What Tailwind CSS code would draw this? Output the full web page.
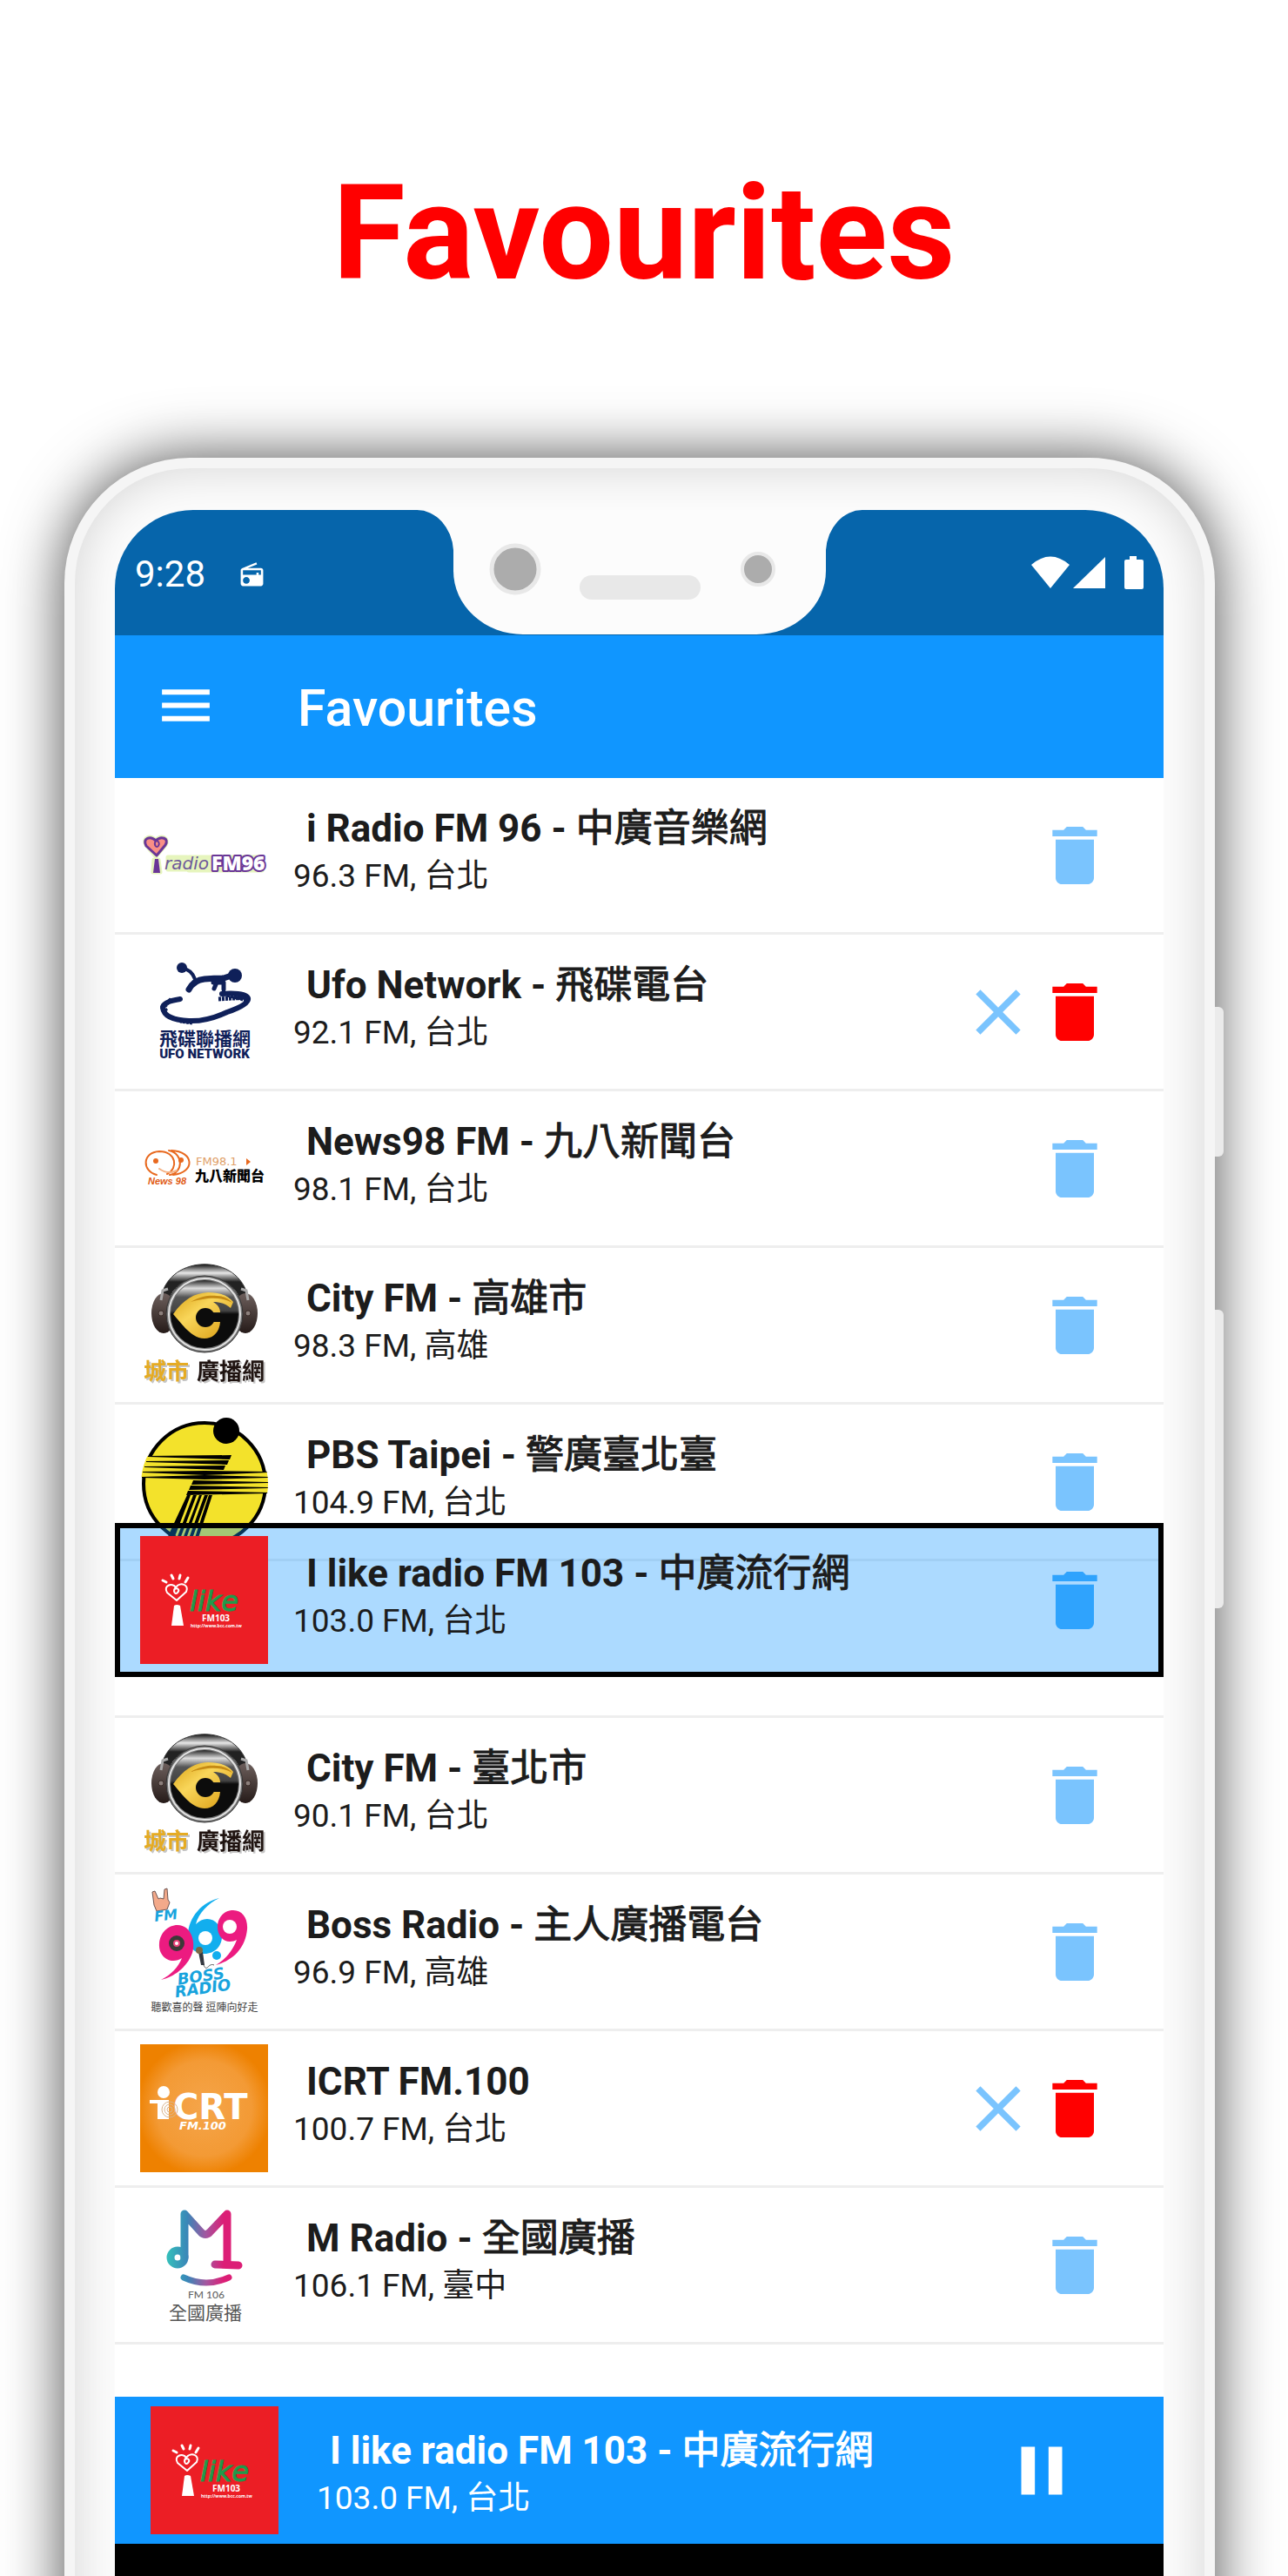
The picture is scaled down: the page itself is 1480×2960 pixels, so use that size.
<!DOCTYPE html>
<html lang="en">
  <head>
    <meta charset="UTF-8" />
    <meta name="viewport" content="width=device-width, initial-scale=1.0" />
    <title>Favourites</title>
    <!-- Tailwind CSS CDN -->
    <script src="https://cdn.jsdelivr.net/npm/@tailwindcss/browser@4"></script>
  </head>
  <body class="bg-white font-[Roboto,'Noto_Sans_CJK_TC',sans-serif] text-[#1c1c1c]">
    <!-- Shared icons and gradients -->
    <svg class="absolute size-0" aria-hidden="true">
      <defs>
        <linearGradient id="band" x1="0" y1="0" x2="0" y2="1">
          <stop offset="0" stop-color="#111" />
          <stop offset="0.25" stop-color="#e8e8e8" />
          <stop offset="0.5" stop-color="#222" />
        </linearGradient>
        <linearGradient id="glass" x1="0" y1="0" x2="0" y2="1">
          <stop offset="0" stop-color="#222" />
          <stop offset="0.12" stop-color="#ddd" />
          <stop offset="0.25" stop-color="#555" />
          <stop offset="0.45" stop-color="#444" />
          <stop offset="0.5" stop-color="#0c0c0c" />
          <stop offset="1" stop-color="#0c0c0c" />
        </linearGradient>
        <linearGradient id="gold" x1="0" y1="0" x2="1" y2="1">
          <stop offset="0" stop-color="#d9a114" />
          <stop offset="0.4" stop-color="#f9d65a" />
          <stop offset="1" stop-color="#d99a10" />
        </linearGradient>
        <linearGradient id="pad" x1="0" y1="0" x2="0" y2="1">
          <stop offset="0" stop-color="#6d5f5c" />
          <stop offset="1" stop-color="#251a18" />
        </linearGradient>
        <radialGradient id="orange" cx="0.5" cy="0.5" r="0.62">
          <stop offset="0" stop-color="#f5a54a" />
          <stop offset="0.6" stop-color="#f39a35" />
          <stop offset="0.85" stop-color="#ee8100" />
        </radialGradient>
        <linearGradient id="mradio" gradientUnits="userSpaceOnUse" x1="32" y1="0" x2="112" y2="0">
          <stop offset="0" stop-color="#35bdbb" />
          <stop offset="0.28" stop-color="#3a86b8" />
          <stop offset="0.55" stop-color="#a4569f" />
          <stop offset="0.8" stop-color="#dc1e76" />
        </linearGradient>
        <clipPath id="disc"><circle cx="74" cy="76" r="73" /></clipPath>
      </defs>

      <symbol id="trash" viewBox="0 0 24 24">
        <path d="M6 19c0 1.1.9 2 2 2h8c1.1 0 2-.9 2-2V7H6v12zM19 4h-3.5l-1-1h-5l-1 1H5v2h14V4z" />
      </symbol>
      <symbol id="close" viewBox="0 0 24 24">
        <path d="M19 6.41L17.59 5 12 10.59 6.41 5 5 6.41 10.59 12 5 17.59 6.41 19 12 13.41 17.59 19 19 17.59 13.41 12z" />
      </symbol>
      <symbol id="headphones" viewBox="0 0 147 147">
        <path d="M24 42C34-9 114-9 124 42l-9 2C104 10 44 10 33 44z" fill="url(#band)" stroke="#333" />
        <ellipse cx="27" cy="60" rx="14" ry="23" fill="url(#pad)" />
        <ellipse cx="121" cy="60" rx="14" ry="23" fill="url(#pad)" />
        <circle cx="24" cy="60" r="3" fill="#8b7f7b" stroke="#3a2c29" />
        <circle cx="124" cy="60" r="3" fill="#8b7f7b" stroke="#3a2c29" />
        <path d="M24 45l2-11 6-2M124 45l-2-11-6-2" fill="none" stroke="#aaa" stroke-width="3" />
        <circle cx="74" cy="61" r="44" fill="#777" stroke="#333" />
        <circle cx="74" cy="61" r="41" fill="none" stroke="#e3e3e3" stroke-width="2" />
        <circle cx="74" cy="61" r="39" fill="url(#glass)" />
        <path d="M38 61C50 44 62 37 78 36c14 0 24 4 29 11l-3 7c-6-5-12-7-20-7 5 3 8 7 8 12H81c-5-4-15-1-15 6 0 9 11 12 15 5h11c-1 12-8 19-18 19-14 0-24-14-36-28z" fill="url(#gold)" />
        <path d="M58 47c12-7 22-8 30-7 8 0 14 3 18 8-10-6-24-6-34-4q-8 1-14 3z" fill="#c58a14" />
        <circle cx="75" cy="65" r="11" fill="#0c0c0c" />
        <path d="M75 60h18v9H75z" fill="#0c0c0c" />
      </symbol>
    </svg>

    <main class="flex min-h-screen flex-col overflow-hidden">
      <h1 class="h-[526px] pt-[180px] text-center text-[152px] leading-[176px] font-bold text-[#ff0000]">Favourites</h1>

      <!-- Phone -->
      <div class="relative -mb-24 ml-[74px] mr-[84px] flex grow flex-col rounded-t-[144px] bg-[#f5f5f5] px-3 pt-3 shadow-[0_0_68px_rgba(0,0,0,0.7)]">
        <!-- Side buttons -->
        <div class="absolute left-full top-[631px] h-[172px] w-[10px] rounded-r-md bg-[#ebebeb]"></div>
        <div class="absolute left-full top-[979px] h-[343px] w-[10px] rounded-r-md bg-[#ebebeb]"></div>

        <div class="flex grow flex-col rounded-t-[132px] bg-[#fcfcfc] pl-[46px] pr-[47px] pt-12 shadow-[inset_0_0_56px_rgba(0,0,0,0.16)]">
          <!-- Screen -->
          <div class="flex grow flex-col overflow-hidden rounded-t-[90px] bg-white">
            <!-- Status bar -->
            <div class="flex h-36 justify-between bg-[#0665ab] text-white">
              <div class="flex flex-1 items-center gap-[38px] pl-[23px] pt-1">
                <span class="text-[42px] leading-[50px]">9:28</span>
                <svg class="size-[31px]" viewBox="0 0 24 24" fill="currentColor">
                  <path d="M3.24 6.15C2.51 6.43 2 7.17 2 8v12c0 1.1.89 2 2 2h16c1.11 0 2-.9 2-2V8c0-1.11-.89-2-2-2H8.3l8.26-3.34L15.88 1 3.24 6.15zM7 20c-1.66 0-3-1.34-3-3s1.34-3 3-3 3 1.34 3 3-1.34 3-3 3zm13-8h-2v-2h-2v2H4V8h16v4z" />
                </svg>
              </div>
              <!-- Notch -->
              <svg class="h-[143px] w-[512px]" viewBox="0 0 512 143">
                <path d="M0 0A42 50 0 0 1 42 46V70A80 73 0 0 0 122 143H390A80 73 0 0 0 470 70V46A42 50 0 0 1 512 0z" fill="#fcfcfc" />
                <circle cx="113" cy="68" r="27" fill="#acacac" stroke="#e8e8e8" stroke-width="5" />
                <circle cx="392" cy="68" r="18" fill="#acacac" stroke="#e8e8e8" stroke-width="4" />
                <rect x="187" y="75" width="139" height="28" rx="14" fill="#e8e8e8" />
              </svg>
              <div class="flex flex-1 items-center justify-end pr-[22px]">
                <svg class="h-[38px] w-[130px]" viewBox="0 0 130 38" fill="currentColor">
                  <path d="M0 10Q22-9 44 10L22 37z" />
                  <path d="M48 37L85 1v36z" />
                  <path d="M113 0h8v4h6q2 0 2 2v30q0 2-2 2h-18q-2 0-2-2V6q0-2 2-2h4z" />
                </svg>
              </div>
            </div>

            <!-- App bar -->
            <header class="flex h-[164px] items-center gap-[92px] bg-[#1096ff] pb-1 pl-[45px] text-white">
              <button type="button" aria-label="Menu">
                <svg class="size-[73px]" viewBox="0 0 24 24" fill="currentColor">
                  <path d="M3 18h18v-2H3v2zm0-5h18v-2H3v2zm0-7v2h18V6H3z" />
                </svg>
              </button>
              <h2 class="pt-2 text-[59px] leading-[70px] font-medium">Favourites</h2>
            </header>

            <!-- Stations -->
            <ul class="h-[1860px]">
              <li class="flex h-45 items-center border-b-3 border-[#eee] pl-[29px] pr-[58px]">
                <svg class="size-[147px]" viewBox="0 0 147 147">
                  <g stroke="#e6f5bd" stroke-width="5" stroke-linejoin="round" fill="#e6f5bd">
                    <path d="M18 75L7 62c-5-9 6-12 11-5 5-8 16-3 11 5zM16 79h5l2 14h-8z" />
                    <path d="M32 76h22v14h-22zM56 76h84v15h-84z" />
                  </g>
                  <path d="M19 74L7 63c-5-9 5-12 11-6 6-6 16-3 11 5z" fill="#f98f86" stroke="#6a3696" stroke-width="3" stroke-linejoin="round" />
                  <path d="M18 57c-3 5 1 9 3 6s0-6-3-6" fill="none" stroke="#6a3696" stroke-width="2" />
                  <path d="M17 78h4l2 16h-8z" fill="#6a3696" />
                  <text x="28" y="90" font-family="DejaVu Sans" font-style="italic" font-size="20" fill="#6e5a9a">radio</text>
                  <text x="82" y="91" font-family="Open Sans" font-weight="800" font-size="23" fill="#fff" stroke="#6a3696" stroke-width="4" stroke-linejoin="round" paint-order="stroke">FM96</text>
                </svg>
                <div class="ml-[29px] grow self-start pt-[31px]">
                  <h3 class="pl-[15px] text-[44px] leading-[54px] font-bold">i Radio FM 96 - <span class="font-normal [-webkit-text-stroke:1px]">中廣音樂網</span></h3>
                  <p class="text-[37px] leading-[56px]">96.3 FM, 台北</p>
                </div>
                <button type="button" aria-label="Delete" class="text-[#7ac4fe]"><svg class="size-22 fill-current"><use href="#trash" /></svg></button>
              </li>
              <li class="flex h-45 items-center border-b-3 border-[#eee] pl-[29px] pr-[58px]">
                <svg class="size-[147px]" viewBox="0 0 147 147">
                  <g fill="none" stroke="#0f2059" stroke-linecap="round" stroke-linejoin="round">
                    <path d="M49 24q10 1 14 12" stroke-width="4" />
                    <path d="M56 48q6-11 18-12t22-1l12-4" stroke-width="7" />
                    <path d="M84 40l12 0 0 8M88 40l-3 7" stroke-width="5" />
                    <path d="M46 59q-20 3-20 10 2 14 30 15 20 1 44-10 26-9 24-16-3-7-30-5" stroke-width="6" />
                    <path d="M28 67l8-8M30 73l-5-7M60 86l-14-2M90 59l34-2M100 54l22 6" stroke-width="5" stroke-dasharray="3 1" stroke-linecap="butt" />
                  </g>
                  <circle cx="48" cy="23" r="6" fill="#0f2059" />
                  <circle cx="109" cy="32" r="8" fill="#0f2059" />
                  <text x="22" y="112" font-weight="700" font-size="21" fill="#0f2059">飛碟聯播網</text>
                  <text x="74" y="127" text-anchor="middle" font-weight="900" font-size="15" fill="#0f2059">UFO NETWORK</text>
                </svg>
                <div class="ml-[29px] grow self-start pt-[31px]">
                  <h3 class="pl-[15px] text-[44px] leading-[54px] font-bold">Ufo Network - <span class="font-normal [-webkit-text-stroke:1px]">飛碟電台</span></h3>
                  <p class="text-[37px] leading-[56px]">92.1 FM, 台北</p>
                </div>
                <button type="button" aria-label="Cancel" class="text-[#7ac4fe]"><svg class="size-22 fill-current"><use href="#close" /></svg></button>
                <button type="button" aria-label="Confirm delete" class="text-[#ff0000]"><svg class="size-22 fill-current"><use href="#trash" /></svg></button>
              </li>
              <li class="flex h-45 items-center border-b-3 border-[#eee] pl-[29px] pr-[58px]">
                <svg class="size-[147px]" viewBox="0 0 147 147">
                  <g fill="none" stroke="#e8691f" stroke-width="2" stroke-linecap="round">
                    <path d="M19 81C2 77 2 55 22 54c20 0 22 20 9 26" />
                    <path d="M33 53c18 4 16 26 1 28M36 53c26 1 28 25 2 28" />
                    <path d="M22 74q10 7 20 2" stroke="#f4b183" />
                  </g>
                  <circle cx="18" cy="65" r="3" fill="#e8691f" />
                  <circle cx="47" cy="64" r="3" fill="#e8691f" />
                  <text x="9" y="92" font-family="Liberation Sans" font-style="italic" font-weight="700" font-size="11" fill="#e05a14">News 98</text>
                  <text x="64" y="70" font-family="DejaVu Sans" font-size="13" fill="#e0a069">FM98.1</text>
                  <path d="M122 62l5 4-5 4z" fill="#e8691f" />
                  <text x="63" y="88" font-weight="900" font-size="16" fill="#000">九八新聞台</text>
                </svg>
                <div class="ml-[29px] grow self-start pt-[31px]">
                  <h3 class="pl-[15px] text-[44px] leading-[54px] font-bold">News98 FM - <span class="font-normal [-webkit-text-stroke:1px]">九八新聞台</span></h3>
                  <p class="text-[37px] leading-[56px]">98.1 FM, 台北</p>
                </div>
                <button type="button" aria-label="Delete" class="text-[#7ac4fe]"><svg class="size-22 fill-current"><use href="#trash" /></svg></button>
              </li>
              <li class="flex h-45 items-center border-b-3 border-[#eee] pl-[29px] pr-[58px]">
                <svg class="size-[147px]" viewBox="0 0 147 147">
                  <use href="#headphones" />
                  <g class="drop-shadow-[2px_2px_0_#c5c5c5]" font-weight="700" font-size="26">
                    <text x="4" y="136" fill="#e5ab23">城市</text>
                    <text x="65" y="136" fill="#1f1310">廣播網</text>
                  </g>
                </svg>
                <div class="ml-[29px] grow self-start pt-[31px]">
                  <h3 class="pl-[15px] text-[44px] leading-[54px] font-bold">City FM - <span class="font-normal [-webkit-text-stroke:1px]">高雄市</span></h3>
                  <p class="text-[37px] leading-[56px]">98.3 FM, 高雄</p>
                </div>
                <button type="button" aria-label="Delete" class="text-[#7ac4fe]"><svg class="size-22 fill-current"><use href="#trash" /></svg></button>
              </li>
              <li class="flex h-45 items-center border-b-3 border-[#eee] pl-[29px] pr-[58px]">
                <svg class="size-[147px]" viewBox="0 0 147 147">
                  <circle cx="74" cy="76" r="70" fill="#f3e22b" stroke="#000" stroke-width="4" />
                  <g clip-path="url(#disc)">
                    <path d="M0 44h50v24H0zM100 63h47v23h-47z" fill="#f3e22b" />
                    <path d="M9 44L105 43l-2 5L9 45zM7 50l95-1-2 5L7 51zM5 56l93-1-2 5L5 57z" />
                    <path d="M3 62l71-1 73 1v1l-73 3-71-3zM2 68l72-2 73 2v1l-73 2-72-2z" />
                    <path d="M61 72l86 2v1l-88 2zM58 78l89 2v1l-91 2zM55 84l92 2v1l-94 2z" />
                    <path d="M54 89h4L36 147h-9zM61 89h4L43 147h-4zM68 89h3L50 147h-4zM74 89h4L57 147h-4zM79 89h4L64 147h-4z" />
                  </g>
                  <circle cx="99" cy="15" r="15" />
                </svg>
                <div class="ml-[29px] grow self-start pt-[31px]">
                  <h3 class="pl-[15px] text-[44px] leading-[54px] font-bold">PBS Taipei - <span class="font-normal [-webkit-text-stroke:1px]">警廣臺北臺</span></h3>
                  <p class="text-[37px] leading-[56px]">104.9 FM, 台北</p>
                </div>
                <button type="button" aria-label="Delete" class="text-[#7ac4fe]"><svg class="size-22 fill-current"><use href="#trash" /></svg></button>
              </li>
              <!-- Row being dragged, lifted over the row above -->
              <li class="relative h-45 border-b-3 border-[#eee]">
                <div class="absolute inset-x-0 -top-11 flex h-[177px] items-center border-6 border-black bg-[#1096ff]/35 pl-[23px] pr-[52px]">
                  <svg class="size-[147px]" viewBox="0 0 147 147">
                    <path d="M0 0h147v147H0z" fill="#ec1e25" />
                    <g fill="none" stroke="#fff" stroke-linecap="round" stroke-linejoin="round">
                      <path d="M26 51l4 2M36 45l2 4M46 45l-1 4M55 48l-3 5" stroke-width="3" />
                      <path d="M42 74L31 65c-5-8 6-12 10-6 5-7 16-3 12 5z" stroke-width="2" />
                      <path d="M41 59c-4 4-1 9 2 6s0-6-3-4" stroke-width="2" />
                    </g>
                    <path d="M39 80q3-2 7 0l4 23H36z" fill="#fff" />
                    <text x="57" y="86" font-family="DejaVu Sans" font-style="italic" font-size="32" fill="#1f9a4b" stroke="#1f9a4b">like</text>
                    <text x="71" y="98" font-family="Open Sans" font-weight="700" font-size="10" fill="#fff">FM103</text>
                    <text x="58" y="105" font-family="Open Sans" font-weight="700" font-size="5" fill="#fff">http://www.bcc.com.tw</text>
                  </svg>
                  <div class="ml-[29px] grow self-start pt-[25px]">
                    <h3 class="pl-[15px] text-[44px] leading-[54px] font-bold">I like radio FM 103 - <span class="font-normal [-webkit-text-stroke:1px]">中廣流行網</span></h3>
                    <p class="text-[37px] leading-[56px]">103.0 FM, 台北</p>
                  </div>
                  <button type="button" aria-label="Delete" class="text-[#2fa3fd]"><svg class="size-22 fill-current"><use href="#trash" /></svg></button>
                </div>
              </li>
              <li class="flex h-45 items-center border-b-3 border-[#eee] pl-[29px] pr-[58px]">
                <svg class="size-[147px]" viewBox="0 0 147 147">
                  <use href="#headphones" />
                  <g class="drop-shadow-[2px_2px_0_#c5c5c5]" font-weight="700" font-size="26">
                    <text x="4" y="136" fill="#e5ab23">城市</text>
                    <text x="65" y="136" fill="#1f1310">廣播網</text>
                  </g>
                </svg>
                <div class="ml-[29px] grow self-start pt-[31px]">
                  <h3 class="pl-[15px] text-[44px] leading-[54px] font-bold">City FM - <span class="font-normal [-webkit-text-stroke:1px]">臺北市</span></h3>
                  <p class="text-[37px] leading-[56px]">90.1 FM, 台北</p>
                </div>
                <button type="button" aria-label="Delete" class="text-[#7ac4fe]"><svg class="size-22 fill-current"><use href="#trash" /></svg></button>
              </li>
              <li class="flex h-45 items-center border-b-3 border-[#eee] pl-[29px] pr-[58px]">
                <svg class="size-[147px]" viewBox="0 0 147 147">
                  <path d="M14 5l3-1 4 9 2-1 4 1 1-11 3-1 1 13 2 3-3 8-12 2-3-7z" fill="#f3a98a" stroke="#6d5350" />
                  <text x="17" y="39" transform="rotate(-7 17 39)" font-family="DejaVu Sans" font-style="italic" font-weight="700" font-size="16" fill="#17a3dd">FM</text>
                  <path d="M91 12C78 18 67 30 64 42c4-4 8-6 13-6 10 0 17 9 17 20s-8 20-20 20-19-8-19-21C55 34 72 16 91 12z" fill="#12aeee" />
                  <circle cx="75" cy="58" r="8" fill="#fff" />
                  <path d="M24 106C38 103 54 92 60 75c4-12-1-32-17-32-11 0-20 9-21 21-1 12 7 20 16 20 4 0 7-1 10-3-4 10-12 19-24 25z" fill="#ec1b80" />
                  <circle cx="42" cy="64" r="9" fill="#3d3838" />
                  <circle cx="42" cy="64" r="3" fill="#fff" stroke="#e9427a" stroke-width="2" />
                  <path d="M87 89C106 84 121 70 123 48c1-12-5-22-16-22s-18 9-18 19 6 17 14 17c3 0 6-1 8-2-4 11-12 22-24 29z" fill="#ec1b80" />
                  <circle cx="103" cy="45" r="8" fill="#fff" />
                  <circle cx="88" cy="78" r="5" fill="#12aeee" />
                  <path d="M67 74l3 15h4l-2-15z" fill="#343840" />
                  <circle cx="68" cy="72" r="4" fill="#7c6a45" />
                  <path d="M73 89c4 9 5-3 12 0" fill="none" stroke="#555" />
                  <g transform="rotate(-8 42 114)" font-family="DejaVu Sans" font-style="italic" font-weight="700" font-size="18" fill="#17a3dd">
                    <text x="44" y="112">BOSS</text>
                    <text x="39" y="126">RADIO</text>
                  </g>
                  <text x="74" y="142" text-anchor="middle" font-size="12" fill="#444">聽歡喜的聲 逗陣向好走</text>
                </svg>
                <div class="ml-[29px] grow self-start pt-[31px]">
                  <h3 class="pl-[15px] text-[44px] leading-[54px] font-bold">Boss Radio - <span class="font-normal [-webkit-text-stroke:1px]">主人廣播電台</span></h3>
                  <p class="text-[37px] leading-[56px]">96.9 FM, 高雄</p>
                </div>
                <button type="button" aria-label="Delete" class="text-[#7ac4fe]"><svg class="size-22 fill-current"><use href="#trash" /></svg></button>
              </li>
              <li class="flex h-45 items-center border-b-3 border-[#eee] pl-[29px] pr-[58px]">
                <svg class="size-[147px]" viewBox="0 0 147 147">
                  <path d="M0 0h147v147H0z" fill="url(#orange)" />
                  <circle cx="27" cy="55" r="7" fill="#fff" />
                  <path d="M11 64h22v22H20V68h-9z" fill="#fff" />
                  <text x="38" y="86" font-family="DejaVu Sans" font-weight="700" font-size="40" fill="#fff">CRT</text>
                  <g fill="none" stroke="#d9b48c">
                    <circle cx="34" cy="75" r="3" />
                    <circle cx="34" cy="75" r="6" />
                    <circle cx="34" cy="75" r="9" />
                  </g>
                  <text x="45" y="98" font-family="DejaVu Sans" font-style="italic" font-weight="700" font-size="13" fill="#fff">FM.100</text>
                </svg>
                <div class="ml-[29px] grow self-start pt-[31px]">
                  <h3 class="pl-[15px] text-[44px] leading-[54px] font-bold">ICRT FM.100</h3>
                  <p class="text-[37px] leading-[56px]">100.7 FM, 台北</p>
                </div>
                <button type="button" aria-label="Cancel" class="text-[#7ac4fe]"><svg class="size-22 fill-current"><use href="#close" /></svg></button>
                <button type="button" aria-label="Confirm delete" class="text-[#ff0000]"><svg class="size-22 fill-current"><use href="#trash" /></svg></button>
              </li>
              <li class="flex h-45 items-center border-b-3 border-[#eee] pl-[29px] pr-[58px]">
                <svg class="size-[147px]" viewBox="0 0 147 147">
                  <g fill="none" stroke="url(#mradio)" stroke-width="9" stroke-linecap="round" stroke-linejoin="round">
                    <circle cx="43" cy="65" r="8" />
                    <path d="M51 65V15l19 21q5 5 10 0l20-21v58" />
                    <path d="M86 73l27 1" />
                    <path d="M50 88q26 12 52 0" stroke-width="7" />
                  </g>
                  <text x="76" y="112" text-anchor="middle" font-family="Lato" font-weight="500" font-size="12" fill="#666">FM 106</text>
                  <text x="33" y="136" font-size="21" fill="#555">全國廣播</text>
                </svg>
                <div class="ml-[29px] grow self-start pt-[31px]">
                  <h3 class="pl-[15px] text-[44px] leading-[54px] font-bold">M Radio - <span class="font-normal [-webkit-text-stroke:1px]">全國廣播</span></h3>
                  <p class="text-[37px] leading-[56px]">106.1 FM, 臺中</p>
                </div>
                <button type="button" aria-label="Delete" class="text-[#7ac4fe]"><svg class="size-22 fill-current"><use href="#trash" /></svg></button>
              </li>
            </ul>

            <!-- Player -->
            <footer class="flex h-[169px] items-center bg-[#1096ff] pl-[41px] pr-[93px] text-white">
              <svg class="size-[147px]" viewBox="0 0 147 147">
                <path d="M0 0h147v147H0z" fill="#ec1e25" />
                <g fill="none" stroke="#fff" stroke-linecap="round" stroke-linejoin="round">
                  <path d="M26 51l4 2M36 45l2 4M46 45l-1 4M55 48l-3 5" stroke-width="3" />
                  <path d="M42 74L31 65c-5-8 6-12 10-6 5-7 16-3 12 5z" stroke-width="2" />
                  <path d="M41 59c-4 4-1 9 2 6s0-6-3-4" stroke-width="2" />
                </g>
                <path d="M39 80q3-2 7 0l4 23H36z" fill="#fff" />
                <text x="57" y="86" font-family="DejaVu Sans" font-style="italic" font-size="32" fill="#1f9a4b" stroke="#1f9a4b">like</text>
                <text x="71" y="98" font-family="Open Sans" font-weight="700" font-size="10" fill="#fff">FM103</text>
                <text x="58" y="105" font-family="Open Sans" font-weight="700" font-size="5" fill="#fff">http://www.bcc.com.tw</text>
              </svg>
              <div class="ml-[44px] grow self-start pt-[35px]">
                <h3 class="pl-[15px] text-[44px] leading-[54px] font-bold">I like radio FM 103 - <span class="font-normal [-webkit-text-stroke:1px]">中廣流行網</span></h3>
                <p class="text-[37px] leading-[56px]">103.0 FM, 台北</p>
              </div>
              <button type="button" aria-label="Pause">
                <svg class="size-[94px]" viewBox="0 0 24 24" fill="currentColor"><path d="M6 19h4V5H6v14zm8-14v14h4V5h-4z" /></svg>
              </button>
            </footer>
            <!-- System navigation -->
            <div class="min-h-[133px] grow bg-black"></div>
          </div>
        </div>
      </div>
    </main>
  </body>
</html>
